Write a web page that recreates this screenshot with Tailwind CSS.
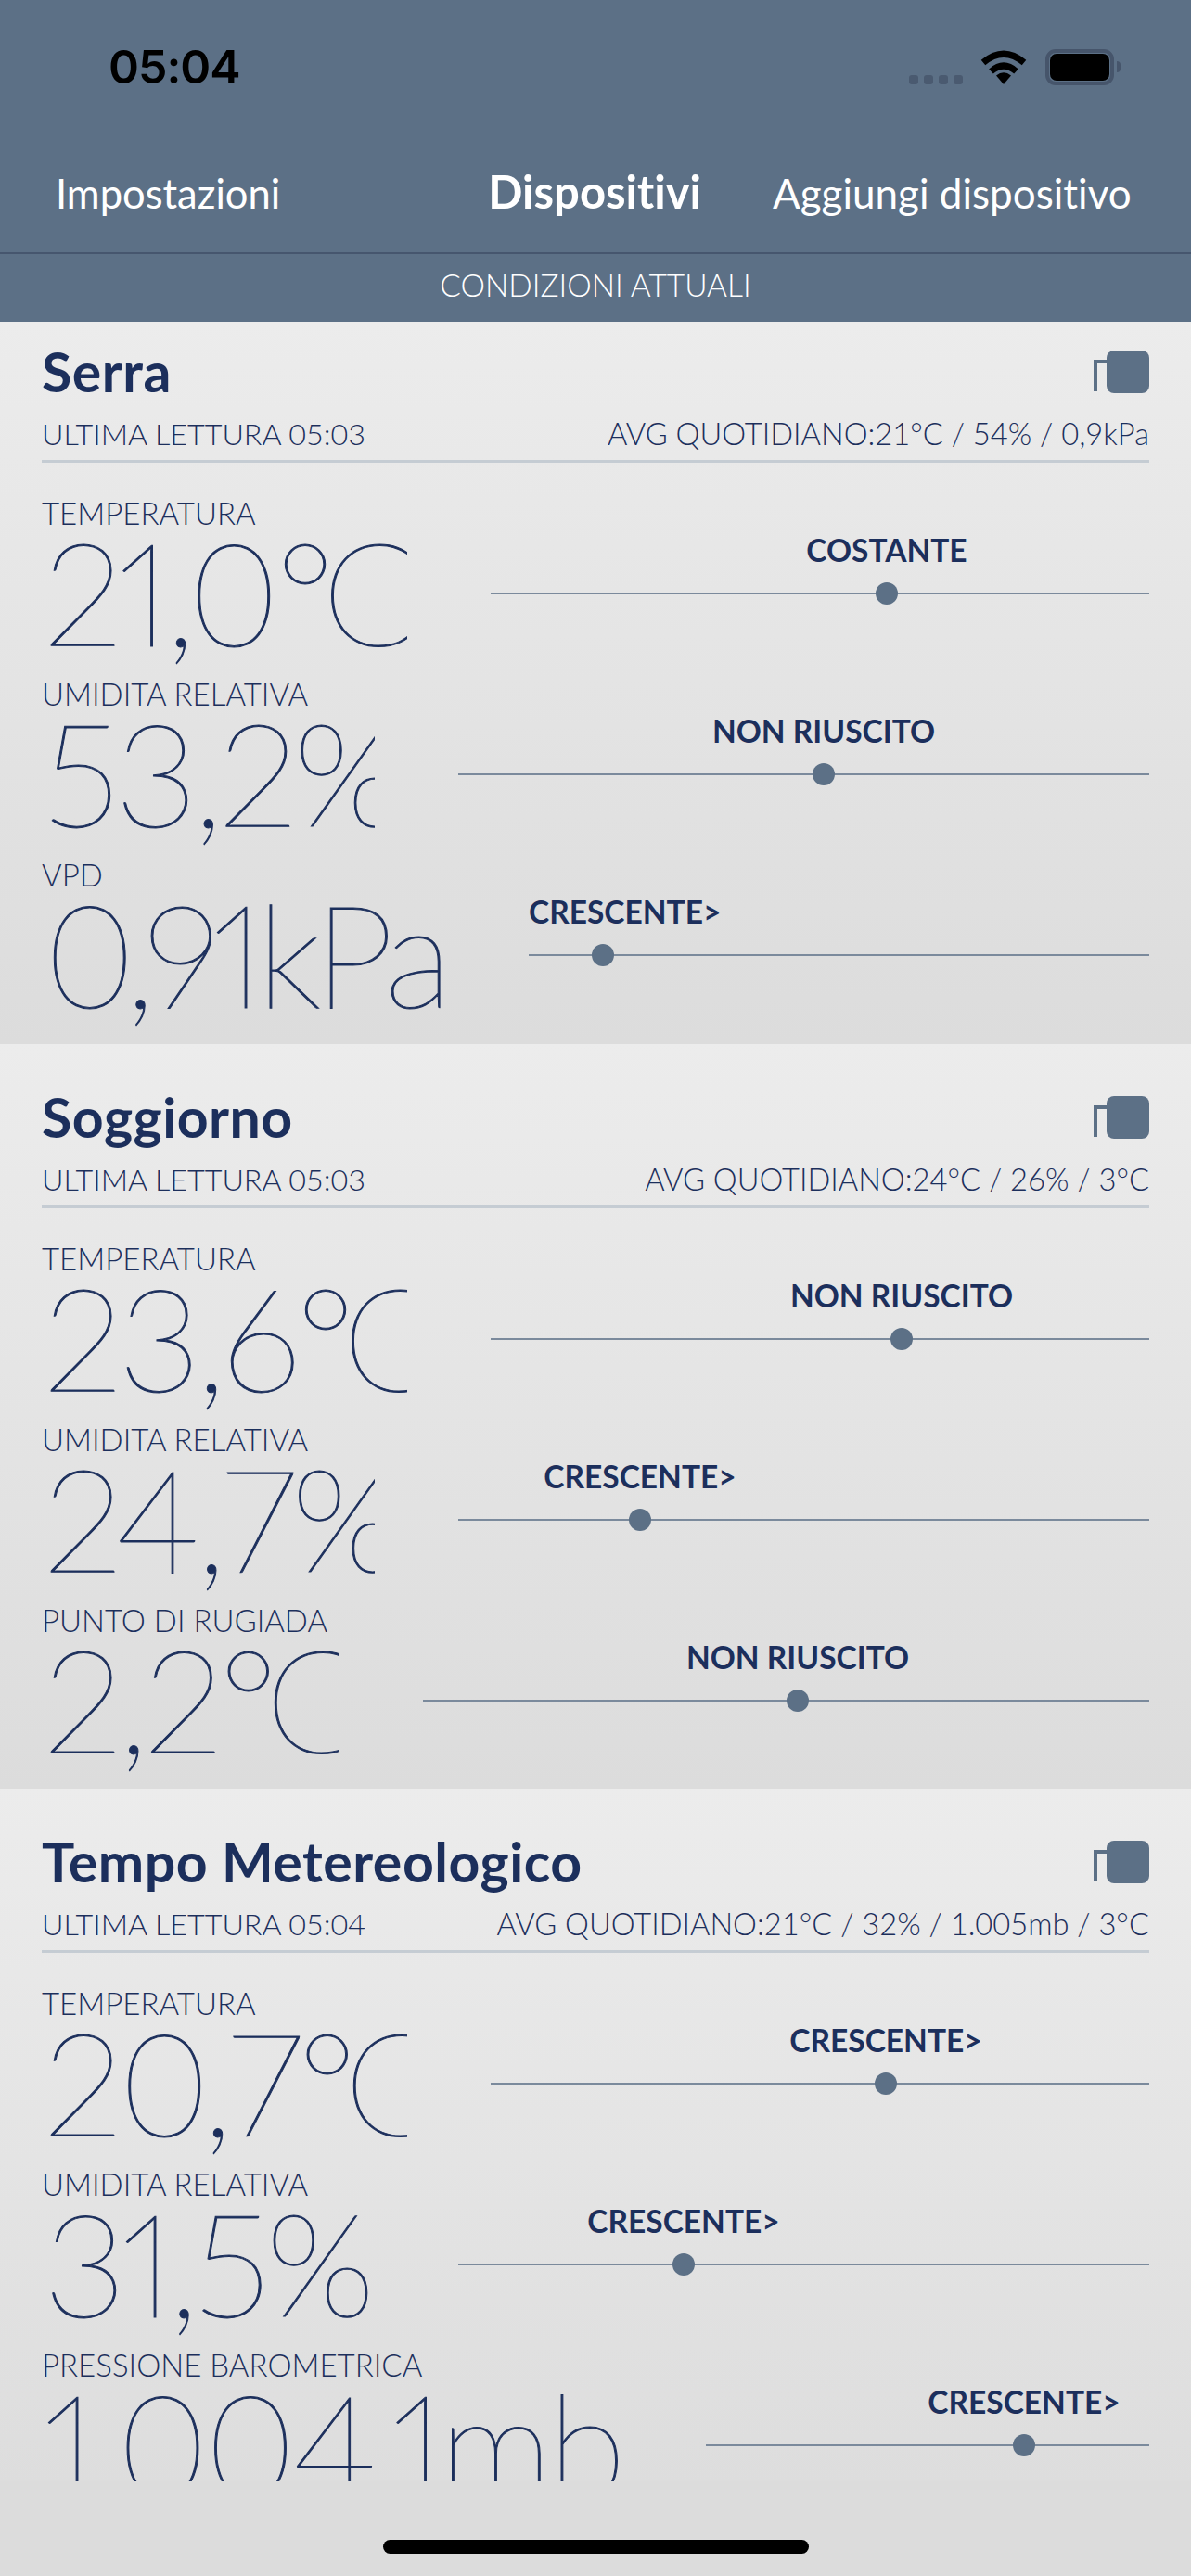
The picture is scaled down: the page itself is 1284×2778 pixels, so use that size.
<!doctype html>
<html lang="it">
  <head>
    <meta charset="UTF-8" />
    <script src="https://cdn.jsdelivr.net/npm/@tailwindcss/browser@4"></script>
    <title>Dispositivi</title>
  </head>
  <body class="font-['Lato',sans-serif] text-[#1c2f5c] [font-variant-ligatures:none]">
    <div class="flex flex-col w-[1284px] h-[2778px] overflow-hidden bg-[#dcdcdc]">
      <!-- Header -->
      <header class="h-[347px] shrink-0 bg-[#5c7086] flex flex-col text-white">
        <div class="h-[146px] flex items-start pt-[53px] pl-[117px] pr-[76px]">
          <span class="font-['Inter',sans-serif] font-semibold text-[50px] leading-[38px] tracking-[-1px] text-black">05:04</span>
          <div class="ml-auto flex items-start">
            <div class="flex gap-[6px] mt-[28px]">
              <span class="w-[10px] h-[10px] rounded-[3px] bg-[#4a5a70]"></span>
              <span class="w-[10px] h-[10px] rounded-[3px] bg-[#4a5a70]"></span>
              <span class="w-[10px] h-[10px] rounded-[3px] bg-[#4a5a70]"></span>
              <span class="w-[10px] h-[10px] rounded-[3px] bg-[#4a5a70]"></span>
            </div>
            <svg class="ml-[19px] mt-[1px]" width="50" height="37" viewBox="0 0 50 37">
              <path d="M3 13.5Q25 -5 47 13.5" fill="none" stroke="#000" stroke-width="7" />
              <path d="M11.5 23Q25 11 38.5 23" fill="none" stroke="#000" stroke-width="7" />
              <path d="M25 37L17 27.5Q25 21 33 27.5Z" fill="#000" />
            </svg>
            <div class="ml-[20px] w-[74px] h-[39px] rounded-[11px] border-[4px] border-[#46556b] p-[1px]">
              <div class="w-full h-full rounded-[7px] bg-black"></div>
            </div>
            <div class="ml-[3px] mt-[13px] w-[4px] h-[12px] rounded-r-full bg-[#46556b]"></div>
          </div>
        </div>
        <div class="h-[128px] border-b-2 border-[#46566e] flex items-baseline pt-[24px] pl-[60px] text-[43.5px]">
          <span>Impostazioni</span>
          <span class="ml-[224px] font-bold text-[49px]">Dispositivi</span>
          <span class="ml-[77px] text-[44px]">Aggiungi dispositivo</span>
        </div>
        <div class="flex-1 flex items-center justify-center pb-[6px] text-[33.5px] font-light">CONDIZIONI ATTUALI</div>
      </header>

      <main class="h-[2329px] shrink-0 overflow-hidden">
        <!-- Serra -->
        <section class="h-[779px] pt-[24px] px-[45px] bg-gradient-to-b from-[#ececec] to-[#dcdcdc]">
          <div class="flex justify-between items-center h-[60px]">
            <h2 class="text-[59px] font-bold tracking-[0.5px]">Serra</h2>
            <svg width="60" height="46" viewBox="0 0 60 46" fill="#5c7086">
              <path d="M0 10H14V14H4V44H0Z" /><rect x="14" width="46" height="46" rx="8" />
            </svg>
          </div>
          <div class="flex justify-between text-[32.3px] leading-[40px] font-light mt-[17px] pb-[8px] border-b-[3px] border-[#c5ccd3]">
            <span>ULTIMA LETTURA 05:03</span><span class="text-[32.7px]">AVG QUOTIDIANO:21°C / 54% / 0,9kPa</span>
          </div>
          <div class="mt-[34px] flex h-[195px]">
            <div class="w-[394px] overflow-hidden">
              <div class="text-[33px] leading-[40px] font-light">TEMPERATURA</div>
              <div class="pl-[2px] text-[155px] leading-[129px] font-extralight tracking-[-5px] [-webkit-text-stroke:1px_#1c2f5c] whitespace-nowrap proportional-nums">21,0<span class="tracking-[-14px]">°</span>C</div>
            </div>
            <div class="flex-1 pl-[90px] pt-[106px]">
              <div class="relative h-[2px] bg-[#7b8a9c]">
                <span class="absolute left-[415px] -top-[11px] w-6 h-6 rounded-full bg-[#5c7086]"></span>
                <span class="absolute left-[427px] -top-[66px] -translate-x-1/2 text-[33.5px] leading-[40px] font-bold whitespace-nowrap">COSTANTE</span>
              </div>
            </div>
          </div>
          <div class="flex h-[195px]">
            <div class="w-[359px] overflow-hidden">
              <div class="text-[33px] leading-[40px] font-light">UMIDITA RELATIVA</div>
              <div class="pl-[2px] text-[155px] leading-[129px] font-extralight tracking-[-5px] [-webkit-text-stroke:1px_#1c2f5c] whitespace-nowrap proportional-nums">53,2%</div>
            </div>
            <div class="flex-1 pl-[90px] pt-[106px]">
              <div class="relative h-[2px] bg-[#7b8a9c]">
                <span class="absolute left-[382px] -top-[11px] w-6 h-6 rounded-full bg-[#5c7086]"></span>
                <span class="absolute left-[394px] -top-[66px] -translate-x-1/2 text-[33.5px] leading-[40px] font-bold whitespace-nowrap">NON RIUSCITO</span>
              </div>
            </div>
          </div>
          <div class="flex h-[195px]">
            <div class="w-[435px] overflow-hidden">
              <div class="text-[33px] leading-[40px] font-light">VPD</div>
              <div class="pl-[2px] text-[155px] leading-[129px] font-extralight tracking-[-8px] [-webkit-text-stroke:1px_#1c2f5c] whitespace-nowrap proportional-nums">0,91kPa</div>
            </div>
            <div class="flex-1 pl-[90px] pt-[106px]">
              <div class="relative h-[2px] bg-[#7b8a9c]">
                <span class="absolute left-[68px] -top-[11px] w-6 h-6 rounded-full bg-[#5c7086]"></span>
                <span class="absolute left-0 -top-[66px] text-[33.5px] leading-[40px] font-bold whitespace-nowrap">CRESCENTE&gt;</span>
              </div>
            </div>
          </div>
        </section>

        <!-- Soggiorno -->
        <section class="h-[803px] pt-[49px] px-[45px] bg-gradient-to-b from-[#ececec] to-[#dcdcdc]">
          <div class="flex justify-between items-center h-[60px]">
            <h2 class="text-[59px] font-bold tracking-[0.5px]">Soggiorno</h2>
            <svg width="60" height="46" viewBox="0 0 60 46" fill="#5c7086">
              <path d="M0 10H14V14H4V44H0Z" /><rect x="14" width="46" height="46" rx="8" />
            </svg>
          </div>
          <div class="flex justify-between text-[32.3px] leading-[40px] font-light mt-[17px] pb-[8px] border-b-[3px] border-[#c5ccd3]">
            <span>ULTIMA LETTURA 05:03</span><span class="text-[32.7px]">AVG QUOTIDIANO:24°C / 26% / 3°C</span>
          </div>
          <div class="mt-[34px] flex h-[195px]">
            <div class="w-[394px] overflow-hidden">
              <div class="text-[33px] leading-[40px] font-light">TEMPERATURA</div>
              <div class="pl-[2px] text-[155px] leading-[129px] font-extralight tracking-[-5px] [-webkit-text-stroke:1px_#1c2f5c] whitespace-nowrap proportional-nums">23,6<span class="tracking-[-14px]">°</span>C</div>
            </div>
            <div class="flex-1 pl-[90px] pt-[106px]">
              <div class="relative h-[2px] bg-[#7b8a9c]">
                <span class="absolute left-[431px] -top-[11px] w-6 h-6 rounded-full bg-[#5c7086]"></span>
                <span class="absolute left-[443px] -top-[66px] -translate-x-1/2 text-[33.5px] leading-[40px] font-bold whitespace-nowrap">NON RIUSCITO</span>
              </div>
            </div>
          </div>
          <div class="flex h-[195px]">
            <div class="w-[359px] overflow-hidden">
              <div class="text-[33px] leading-[40px] font-light">UMIDITA RELATIVA</div>
              <div class="pl-[2px] text-[155px] leading-[129px] font-extralight tracking-[-5px] [-webkit-text-stroke:1px_#1c2f5c] whitespace-nowrap proportional-nums">24,7%</div>
            </div>
            <div class="flex-1 pl-[90px] pt-[106px]">
              <div class="relative h-[2px] bg-[#7b8a9c]">
                <span class="absolute left-[184px] -top-[11px] w-6 h-6 rounded-full bg-[#5c7086]"></span>
                <span class="absolute left-[196px] -top-[66px] -translate-x-1/2 text-[33.5px] leading-[40px] font-bold whitespace-nowrap">CRESCENTE&gt;</span>
              </div>
            </div>
          </div>
          <div class="flex h-[195px]">
            <div class="w-[321px] overflow-hidden">
              <div class="text-[33px] leading-[40px] font-light whitespace-nowrap">PUNTO DI RUGIADA</div>
              <div class="pl-[2px] text-[155px] leading-[129px] font-extralight tracking-[-5px] [-webkit-text-stroke:1px_#1c2f5c] whitespace-nowrap proportional-nums">2,2<span class="tracking-[-14px]">°</span>C</div>
            </div>
            <div class="flex-1 pl-[90px] pt-[106px]">
              <div class="relative h-[2px] bg-[#7b8a9c]">
                <span class="absolute left-[392px] -top-[11px] w-6 h-6 rounded-full bg-[#5c7086]"></span>
                <span class="absolute left-[404px] -top-[66px] -translate-x-1/2 text-[33.5px] leading-[40px] font-bold whitespace-nowrap">NON RIUSCITO</span>
              </div>
            </div>
          </div>
        </section>

        <!-- Tempo Metereologico -->
        <section class="h-[803px] pt-[49px] px-[45px] bg-gradient-to-b from-[#ececec] to-[#dcdcdc]">
          <div class="flex justify-between items-center h-[60px]">
            <h2 class="text-[59px] font-bold tracking-[0.5px]">Tempo Metereologico</h2>
            <svg width="60" height="46" viewBox="0 0 60 46" fill="#5c7086">
              <path d="M0 10H14V14H4V44H0Z" /><rect x="14" width="46" height="46" rx="8" />
            </svg>
          </div>
          <div class="flex justify-between text-[32.3px] leading-[40px] font-light mt-[17px] pb-[8px] border-b-[3px] border-[#c5ccd3]">
            <span>ULTIMA LETTURA 05:04</span><span class="text-[32.7px]">AVG QUOTIDIANO:21°C / 32% / 1.005mb / 3°C</span>
          </div>
          <div class="mt-[34px] flex h-[195px]">
            <div class="w-[394px] overflow-hidden">
              <div class="text-[33px] leading-[40px] font-light">TEMPERATURA</div>
              <div class="pl-[2px] text-[155px] leading-[129px] font-extralight tracking-[-5px] [-webkit-text-stroke:1px_#1c2f5c] whitespace-nowrap proportional-nums">20,7<span class="tracking-[-14px]">°</span>C</div>
            </div>
            <div class="flex-1 pl-[90px] pt-[106px]">
              <div class="relative h-[2px] bg-[#7b8a9c]">
                <span class="absolute left-[414px] -top-[11px] w-6 h-6 rounded-full bg-[#5c7086]"></span>
                <span class="absolute left-[426px] -top-[66px] -translate-x-1/2 text-[33.5px] leading-[40px] font-bold whitespace-nowrap">CRESCENTE&gt;</span>
              </div>
            </div>
          </div>
          <div class="flex h-[195px]">
            <div class="w-[359px] overflow-hidden">
              <div class="text-[33px] leading-[40px] font-light">UMIDITA RELATIVA</div>
              <div class="pl-[2px] text-[155px] leading-[129px] font-extralight tracking-[-5px] [-webkit-text-stroke:1px_#1c2f5c] whitespace-nowrap proportional-nums">31,5%</div>
            </div>
            <div class="flex-1 pl-[90px] pt-[106px]">
              <div class="relative h-[2px] bg-[#7b8a9c]">
                <span class="absolute left-[231px] -top-[11px] w-6 h-6 rounded-full bg-[#5c7086]"></span>
                <span class="absolute left-[243px] -top-[66px] -translate-x-1/2 text-[33.5px] leading-[40px] font-bold whitespace-nowrap">CRESCENTE&gt;</span>
              </div>
            </div>
          </div>
          <div class="flex h-[195px]">
            <div class="w-[626px] overflow-hidden">
              <div class="text-[33px] leading-[40px] font-light">PRESSIONE BAROMETRICA</div>
              <div class="pl-[2px] text-[155px] leading-[129px] font-extralight tracking-[-5px] [-webkit-text-stroke:1px_#1c2f5c] whitespace-nowrap proportional-nums">1.004,1mb</div>
            </div>
            <div class="flex-1 pl-[90px] pt-[106px]">
              <div class="relative h-[2px] bg-[#7b8a9c]">
                <span class="absolute left-[331px] -top-[11px] w-6 h-6 rounded-full bg-[#5c7086]"></span>
                <span class="absolute left-[343px] -top-[66px] -translate-x-1/2 text-[33.5px] leading-[40px] font-bold whitespace-nowrap">CRESCENTE&gt;</span>
              </div>
            </div>
          </div>
        </section>
      </main>

      <!-- Home indicator -->
      <div class="flex-1 flex justify-center pt-[63px]">
        <div class="w-[459px] h-[15px] rounded-full bg-black"></div>
      </div>
    </div>
  </body>
</html>
